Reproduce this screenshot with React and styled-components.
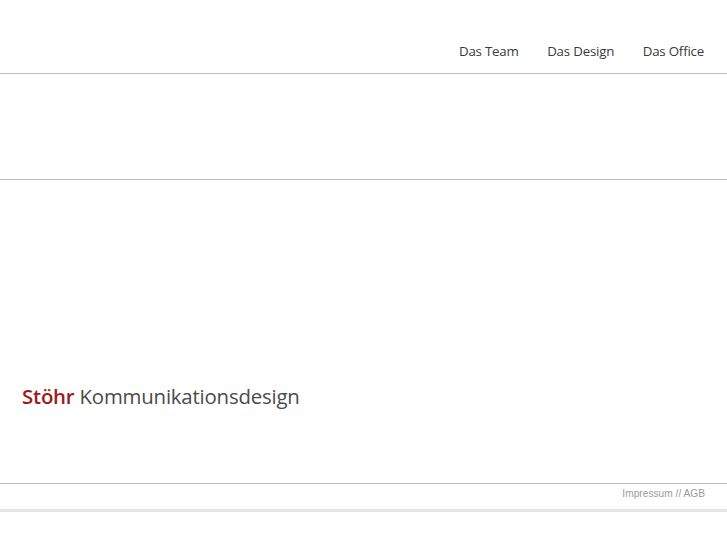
import React from 'react';
import styled, { createGlobalStyle } from 'styled-components';

const GlobalStyle = createGlobalStyle`
  html, body {
    margin: 0;
    padding: 0;
    background: #fff;
  }
`;

const Page = styled.div`
  width: 100%;
  font-family: 'Open Sans', 'Noto Sans', sans-serif;
`;

const Header = styled.header`
  height: 74px;
  border-bottom: 1px solid #bcbcbc;
  display: flex;
  justify-content: flex-end;
  align-items: flex-end;
  padding-right: 23px;
  box-sizing: border-box;
`;

const Nav = styled.nav`
  display: flex;
  gap: 28.5px;
  padding-bottom: 13px;
`;

const NavLink = styled.a`
  font-size: 13.3px;
  color: #3a3a3a;
  text-decoration: none;
  letter-spacing: -0.2px;
`;

const Band = styled.div`
  height: 105px;
  border-bottom: 1px solid #bcbcbc;
`;

const Main = styled.main`
  height: 304px;
  border-bottom: 1px solid #bcbcbc;
  display: flex;
  align-items: flex-end;
  padding: 0 0 73px 22px;
  box-sizing: border-box;
`;

const Brand = styled.h1`
  margin: 0;
  font-size: 20.4px;
  font-weight: 400;
  color: #4a4a4a;
  letter-spacing: -0.2px;
`;

const BrandName = styled.span`
  font-weight: 600;
  color: #9c1a1c;
`;

const Footer = styled.footer`
  height: 25px;
  display: flex;
  justify-content: flex-end;
  align-items: flex-start;
  padding: 4px 22px 0 0;
  box-sizing: content-box;
  height: 21px;
  border-bottom: 3px solid #e4e4e4;
`;

const FooterLink = styled.a`
  font-family: 'Liberation Sans', Arial, sans-serif;
  font-size: 10.2px;
  color: #9a9a9a;
  text-decoration: none;
`;

export default function App() {
  return (
    <Page>
      <GlobalStyle />
      <Header>
        <Nav>
          <NavLink href="#">Das Team</NavLink>
          <NavLink href="#">Das Design</NavLink>
          <NavLink href="#">Das Office</NavLink>
        </Nav>
      </Header>
      <Band />
      <Main>
        <Brand>
          <BrandName>Stöhr</BrandName> Kommunikationsdesign
        </Brand>
      </Main>
      <Footer>
        <FooterLink href="#">Impressum // AGB</FooterLink>
      </Footer>
    </Page>
  );
}
